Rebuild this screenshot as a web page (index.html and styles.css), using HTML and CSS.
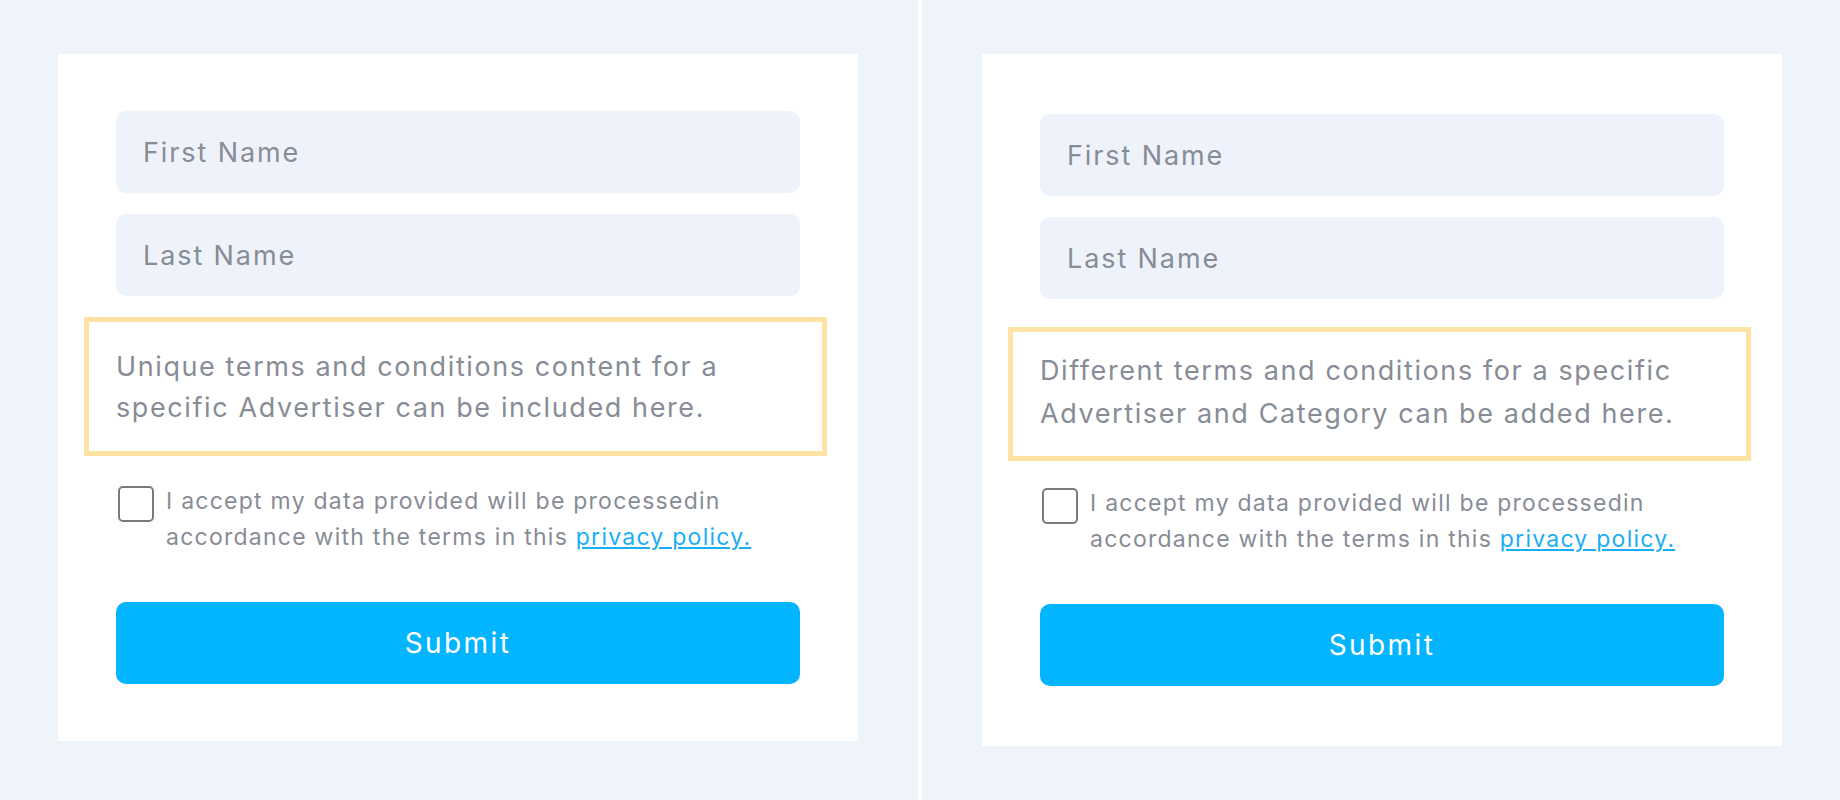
FILE: index.html
```html
<!DOCTYPE html>
<html lang="en">
<head>
<meta charset="utf-8">
<title>Advertiser forms</title>
<link rel="stylesheet" href="styles.css">
</head>
<body>
<div class="page">
  <section class="panel panel-left">
    <form class="card card-left">
      <input class="field" type="text" placeholder="First Name">
      <input class="field field-next" type="text" placeholder="Last Name">
      <div class="terms">Unique terms and conditions content for a<br>specific Advertiser can be included here.</div>
      <label class="consent">
        <input class="check" type="checkbox">
        <span class="consent-text">I accept my data provided will be processedin<br>accordance with the terms in this <a class="link" href="#">privacy policy.</a></span>
      </label>
      <button class="submit" type="button">Submit</button>
    </form>
  </section>
  <div class="divider"></div>
  <section class="panel panel-right">
    <form class="card card-right">
      <input class="field" type="text" placeholder="First Name">
      <input class="field field-next" type="text" placeholder="Last Name">
      <div class="terms">Different terms and conditions for a specific<br>Advertiser and Category can be added here.</div>
      <label class="consent">
        <input class="check" type="checkbox">
        <span class="consent-text">I accept my data provided will be processedin<br>accordance with the terms in this <a class="link" href="#">privacy policy.</a></span>
      </label>
      <button class="submit" type="button">Submit</button>
    </form>
  </section>
</div>
</body>
</html>
```

FILE: styles.css
```css
html, body {
  margin: 0;
  padding: 0;
}

body {
  background: #eff4fb;
  font-family: "Inter", "Open Sans", sans-serif;
  color: #878c96;
}

.page {
  display: flex;
  width: 1840px;
  height: 800px;
}

.panel {
  width: 918px;
  box-sizing: border-box;
  padding-top: 54px;
}

.panel-left {
  padding-left: 58px;
}

.panel-right {
  padding-left: 60px;
}

.divider {
  width: 4px;
  background: #ffffff;
}

.card {
  width: 800px;
  box-sizing: border-box;
  background: #ffffff;
  display: flex;
  flex-direction: column;
  padding: 57px 58px 57px 58px;
}

.card-right {
  padding-top: 60px;
  padding-bottom: 60px;
}

.field {
  display: block;
  height: 82px;
  box-sizing: border-box;
  border: none;
  border-radius: 10px;
  background: #eef3fb;
  padding: 0 27px;
  font-family: inherit;
  font-size: 27px;
  letter-spacing: 1.9px;
  color: #878c96;
  outline: none;
}

.field::placeholder {
  color: #878c96;
  opacity: 1;
}

.field-next {
  margin-top: 21px;
}

.terms {
  margin: 21px -27px 0 -32px;
  border: 5px solid #ffe3a4;
  padding: 24px 27px 23px 27px;
  font-size: 27px;
  letter-spacing: 1.6px;
  line-height: 41px;
}

.card-right .terms {
  margin-top: 28px;
  padding-top: 17px;
  padding-bottom: 21px;
  line-height: 43px;
}

.consent {
  display: flex;
  align-items: flex-start;
  margin-top: 27px;
  margin-left: 2px;
}

.card-right .consent {
  margin-top: 24px;
}

.check {
  appearance: none;
  -webkit-appearance: none;
  flex: none;
  width: 36px;
  height: 36px;
  box-sizing: border-box;
  margin: 3px 12px 0 0;
  border: 2px solid #7b7b7b;
  border-radius: 5px;
  background: #ffffff;
}

.consent-text {
  font-size: 23px;
  letter-spacing: 1.25px;
  line-height: 36px;
}

.link {
  color: #1aaef5;
  text-decoration: underline;
}

.submit {
  margin-top: 47px;
  height: 82px;
  border: none;
  border-radius: 10px;
  background: #03b4fe;
  color: #ffffff;
  font-family: inherit;
  font-size: 28px;
  letter-spacing: 2.4px;
}
```
